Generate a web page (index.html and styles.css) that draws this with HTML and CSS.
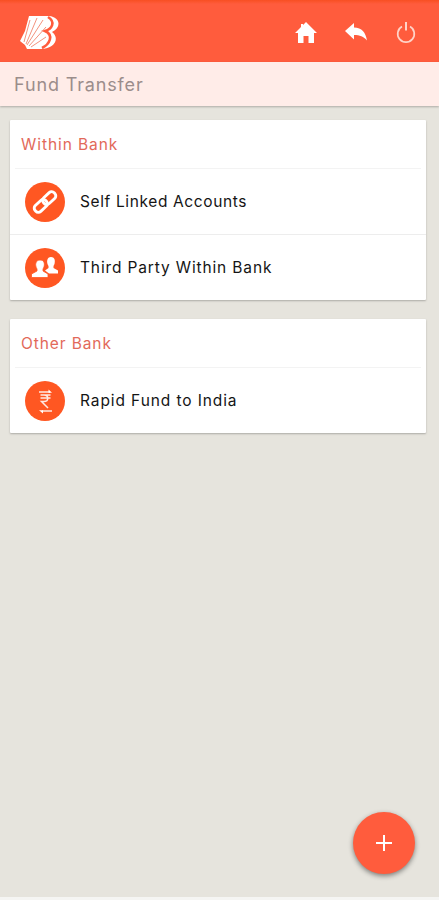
FILE: index.html
```html
<!DOCTYPE html>
<html lang="en">
<head>
<meta charset="utf-8">
<title>Fund Transfer</title>
<link rel="stylesheet" href="styles.css">
</head>
<body>
<header class="topbar">
  <svg class="logo" width="40" height="36" viewBox="0 0 40 36">
    <path fill="#fff" d="M9 1H29C40 2 42 12 32 17C40 23 35 34 21 34H7L5 30L0 26L5 16Z"/>
    <path fill="none" stroke="#ff5c3d" stroke-width="2.6" d="M28 2C36 7 32 14 25 16C34 20 30 29 22 33"/>
    <path fill="none" stroke="#f4937e" stroke-width="1" d="M4 27L10 5M6 29L17 3M7 30L23 5M9 31L26 12M11 32L26 22"/>
  </svg>
  <nav class="actions">
    <svg width="22" height="22" viewBox="0 0 22 22"><path fill="#fff" d="M11 0L22 11H19V21H13.5V14H8.5V21H3V11H0L6 5V2H8V3Z"/></svg>
    <svg width="22" height="22" viewBox="0 0 22 22"><path fill="#fff" d="M0 9L9 1V5.500C17 6 20.500 10 22 18.500C18.500 14.500 15 13 9 13V17.500Z"/></svg>
    <svg width="22" height="22" viewBox="0 0 22 22"><g fill="none" stroke="#ffd3c8" stroke-width="1.7"><path d="M7 4.600A8.300 8.300 0 1 0 15 4.600"/><path stroke-width="2" d="M11 0V8.500"/></g></svg>
  </nav>
</header>
<h1 class="title">Fund Transfer</h1>
<main class="content">
  <section class="card">
    <h2 class="heading within">Within Bank</h2>
    <div class="row">
      <span class="badge"><svg width="40" height="40" viewBox="0 0 40 40"><g fill="none" stroke="#fff" stroke-width="2.900" transform="rotate(-43 20 20)"><rect x="7" y="16" width="14.500" height="8" rx="3.500"/><rect x="18.500" y="16" width="14.500" height="8" rx="3.500"/></g></svg></span>
      <span class="label self">Self Linked Accounts</span>
    </div>
    <div class="row second">
      <span class="badge"><svg width="40" height="40" viewBox="0 0 40 40"><path fill="#fff" d="M26 9C29.500 9 30.500 12 29.500 16L28.500 18V20L33 22.500V25.500H24L20 22.500L23.500 20V18C21 14 22 9 26 9Z"/><path fill="#fff" stroke="#ff5722" stroke-width=".8" d="M15 12C19 12 20 15 19 19L18 21V23L23 26V29.500H6.500V26L12 23V21C9.500 17 10.500 12 15 12Z"/></svg></span>
      <span class="label third">Third Party Within Bank</span>
    </div>
  </section>
  <section class="card">
    <h2 class="heading other">Other Bank</h2>
    <div class="row">
      <span class="badge"><svg width="40" height="40" viewBox="0 0 40 40"><g fill="none" stroke="#ffe9e2" stroke-width="1.500"><path d="M14 11H25M17 30H27"/><path d="M15.500 14H25.500M15.500 17H25.500M16 14H19C24 14 24 20.500 19 20.500H16.500L23 27"/></g><path fill="#fff" d="M23.500 8.500L27 11.700H23.500ZM18 32.500L14 29.300H18Z"/></svg></span>
      <span class="label rapid">Rapid Fund to India</span>
    </div>
  </section>
</main>
<button class="fab" aria-label="Add"><svg width="16" height="16" viewBox="0 0 16 16"><path stroke="#fff" stroke-width="2" d="M8 0V16M0 8H16"/></svg></button>
</body>
</html>
```
FILE: styles.css
```css
* { box-sizing: border-box; }
body {
  margin: 0;
  height: 900px;
  overflow: hidden;
  background: #e6e4dd;
  border-bottom: 3px solid #f5f5f3;
  font-family: Inter, "Open Sans", sans-serif;
}
.topbar {
  height: 62px;
  padding: 3px 22px 0 20px;
  display: flex;
  align-items: center;
  justify-content: space-between;
  background: linear-gradient(#f84f22 0, #ff5c3d 4px);
}
.logo { display: block; }
.actions { display: flex; gap: 28px; }
.title {
  height: 44px;
  margin: 0;
  padding-left: 14px;
  font-size: 18px;
  font-weight: 400;
  line-height: 45px;
  letter-spacing: 0.86px;
  color: #9b8d8b;
  background: #ffece8;
  box-shadow: 0 1px 2px rgba(0, 0, 0, .25);
}
.content {
  display: flex;
  flex-direction: column;
  gap: 19px;
  padding: 14px 13px 0 10px;
}
.card {
  background: #fff;
  border-radius: 1px;
  box-shadow: 0 1px 2px rgba(0, 0, 0, .25);
}
.heading {
  height: 49px;
  margin: 0 5px;
  padding-left: 6px;
  border-bottom: 1px solid #f3f3f3;
  font-size: 15.5px;
  font-weight: 400;
  line-height: 49px;
  color: #e2695a;
}
.row {
  height: 65px;
  padding-left: 15px;
  display: flex;
  align-items: center;
  gap: 15px;
}
.second { height: 66px; border-top: 1px solid #ededed; }
.badge {
  width: 40px;
  height: 40px;
  border-radius: 50%;
  background: #ff5722;
}
.badge svg { display: block; }
.label { font-size: 15.5px; color: #151515; }
.within { letter-spacing: 0.93px; }
.other { letter-spacing: 0.9px; }
.self { letter-spacing: 0.62px; }
.third { letter-spacing: 0.86px; }
.rapid { letter-spacing: 0.9px; }
.fab {
  position: absolute;
  right: 24px;
  bottom: 26px;
  width: 62px;
  height: 62px;
  padding: 0;
  border: 0;
  border-radius: 50%;
  display: grid;
  place-items: center;
  background: #ff5c3d;
  box-shadow: 0 2px 5px rgba(0, 0, 0, .45);
}
```
